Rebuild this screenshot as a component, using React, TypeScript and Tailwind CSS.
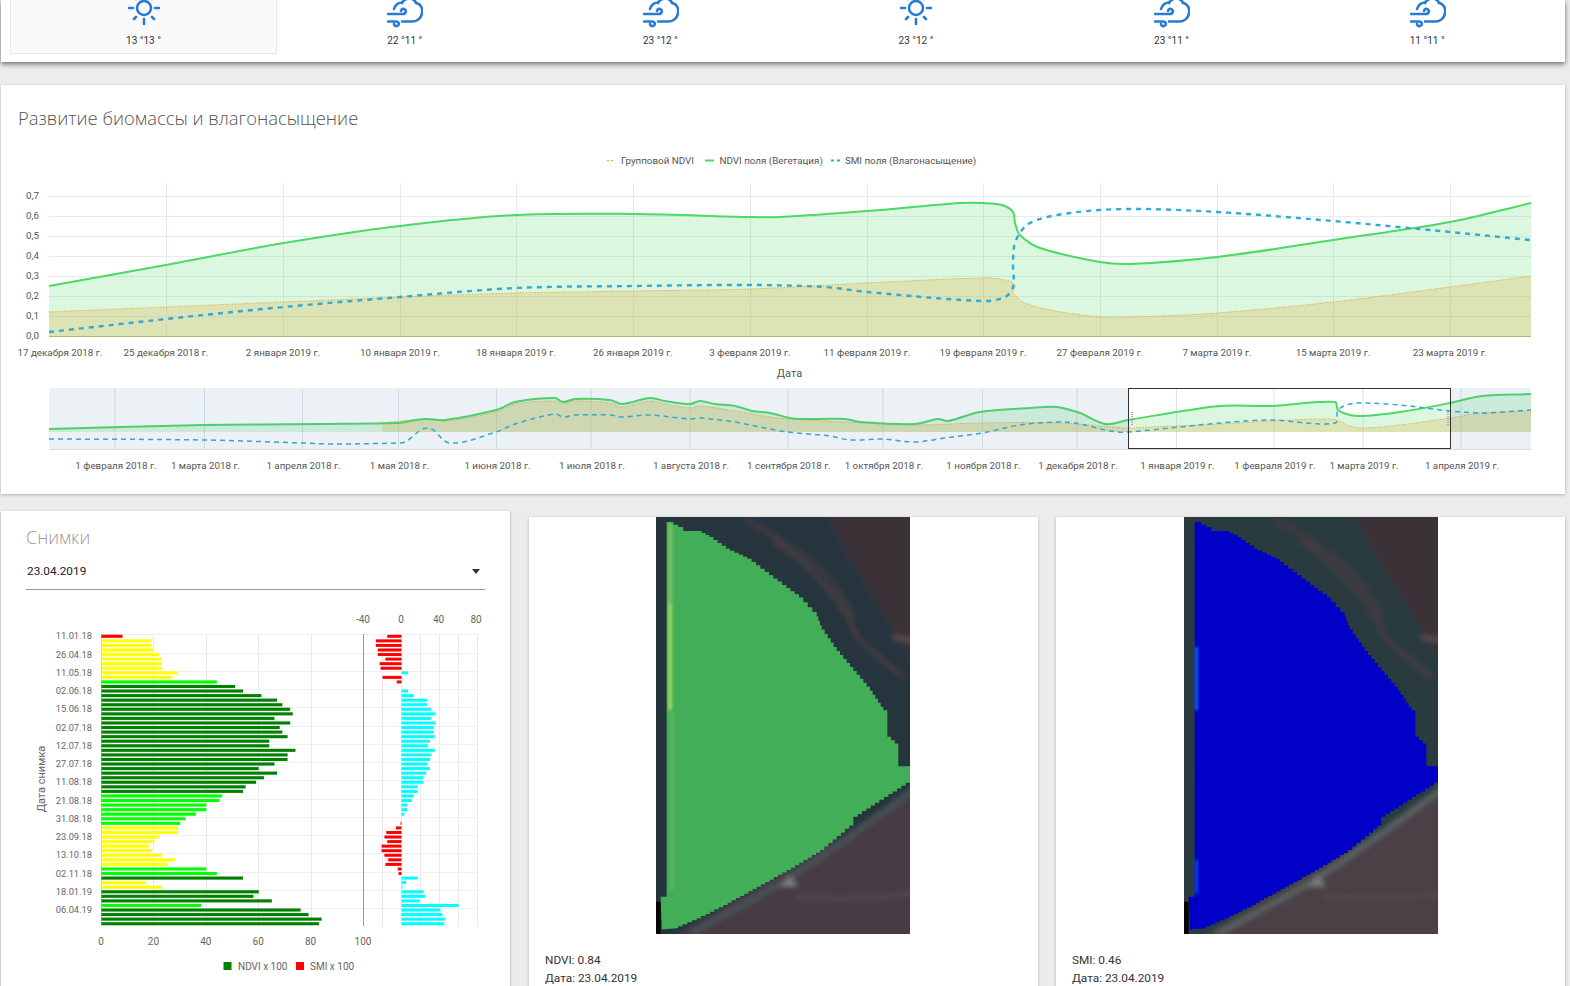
type Pt = [number, number];

// smooth line through points (chord-length catmull-rom to bezier)
function smooth(pts: Pt[]) {
  const dist = (a: Pt, b: Pt) => Math.max(Math.hypot(a[0] - b[0], a[1] - b[1]), 0.01);
  const tangent = (i: number): Pt => {
    const a = pts[Math.max(i - 1, 0)];
    const b = pts[Math.min(i + 1, pts.length - 1)];
    const len = dist(a, b);
    return [(b[0] - a[0]) / len, (b[1] - a[1]) / len];
  };
  let d = `M${pts[0][0]} ${pts[0][1]}`;
  for (let i = 0; i < pts.length - 1; i++) {
    const p1 = pts[i];
    const p2 = pts[i + 1];
    const seg = dist(p1, p2);
    const t1 = tangent(i);
    const t2 = tangent(i + 1);
    const c1x = p1[0] + (t1[0] * seg) / 3;
    const c1y = p1[1] + (t1[1] * seg) / 3;
    const c2x = p2[0] - (t2[0] * seg) / 3;
    const c2y = p2[1] - (t2[1] * seg) / 3;
    d += ` C${c1x.toFixed(1)} ${c1y.toFixed(1)} ${c2x.toFixed(1)} ${c2y.toFixed(1)} ${p2[0]} ${p2[1]}`;
  }
  return d;
}

function area(pts: Pt[], base: number) {
  return `${smooth(pts)} L${pts[pts.length - 1][0]} ${base} L${pts[0][0]} ${base} Z`;
}

// blocky edge, for the low-resolution field mask
function stair(pts: Pt[], step = 13) {
  let d = `M${pts[0][0]} ${pts[0][1]}`;
  for (let i = 1; i < pts.length; i++) {
    const [x0, y0] = pts[i - 1];
    const [x1, y1] = pts[i];
    const n = Math.max(1, Math.round(Math.max(Math.abs(x1 - x0), Math.abs(y1 - y0)) / step));
    for (let k = 1; k <= n; k++) {
      d += ` V${(y0 + ((y1 - y0) * k) / n).toFixed(0)} H${(x0 + ((x1 - x0) * k) / n).toFixed(0)}`;
    }
  }
  return d + ' Z';
}

const mainGreen: Pt[] = [[49, 286], [166, 265], [284, 243], [400, 226], [516, 215], [634, 214], [750, 217], [780, 217], [867, 211], [960, 203], [983, 203], [1002, 205], [1013, 212], [1015, 223], [1020, 235], [1040, 248], [1100, 262], [1130, 264], [1217, 257], [1333, 240], [1450, 222], [1531, 203]];
const mainOrange: Pt[] = [[49, 312], [166, 307], [284, 302], [400, 297], [516, 293], [634, 291], [750, 289], [867, 283], [983, 278], [1005, 280], [1015, 285], [1013, 293], [1030, 305], [1090, 316], [1130, 317], [1217, 313], [1333, 302], [1450, 287], [1531, 276]];
const mainBlue: Pt[] = [[49, 332], [166, 319], [284, 307], [400, 297], [516, 288], [634, 286], [750, 285], [825, 287], [867, 292], [983, 301], [1005, 297], [1013, 287], [1013, 260], [1016, 240], [1030, 223], [1070, 213], [1130, 209], [1217, 212], [1333, 221], [1450, 232], [1530, 240]];

const navGreen: Pt[] = [[49, 429], [204, 425], [320, 424], [398, 423], [405, 422], [425, 419], [445, 420], [496, 410], [515, 402], [555, 398], [563, 402], [575, 399], [610, 400], [622, 404], [650, 398], [665, 401], [690, 404], [700, 401], [715, 404], [735, 406], [752, 411], [770, 413], [790, 418], [800, 419], [845, 419], [860, 422], [915, 424], [938, 419], [948, 421], [980, 412], [1030, 408], [1057, 407], [1080, 413], [1105, 424], [1128, 420], [1220, 406], [1270, 406], [1335, 402], [1338, 410], [1350, 415], [1363, 416], [1400, 412], [1450, 403], [1482, 396], [1531, 394]];
const navOrange: Pt[] = [[382, 423], [425, 419], [445, 421], [496, 412], [515, 404], [555, 401], [563, 404], [575, 401], [610, 403], [622, 407], [650, 401], [665, 404], [690, 408], [700, 406], [735, 411], [770, 417], [790, 419], [845, 422], [915, 425], [980, 423], [1060, 423], [1100, 426], [1128, 428], [1150, 427], [1220, 424], [1270, 421], [1320, 419], [1337, 420], [1350, 426], [1363, 428], [1400, 425], [1450, 418], [1482, 413], [1531, 411]];
const navBlue: Pt[] = [[49, 439], [204, 440], [302, 443], [335, 444], [398, 443], [405, 442], [428, 428], [450, 443], [496, 432], [515, 424], [555, 414], [563, 417], [575, 415], [610, 415], [622, 417], [650, 415], [690, 419], [700, 418], [735, 422], [760, 427], [788, 432], [830, 436], [850, 440], [883, 439], [915, 442], [945, 438], [982, 433], [1020, 425], [1060, 422], [1080, 424], [1110, 431], [1128, 432], [1220, 423], [1270, 420], [1335, 423], [1338, 410], [1350, 404], [1363, 403], [1400, 405], [1450, 411], [1482, 413], [1531, 410]];

const mainTicks: [number, number, string][] = [
  [166, 60, '17 декабря 2018 г.'],
  [166, 166, '25 декабря 2018 г.'],
  [283, 283, '2 января 2019 г.'],
  [400, 400, '10 января 2019 г.'],
  [516, 516, '18 января 2019 г.'],
  [633, 633, '26 января 2019 г.'],
  [750, 750, '3 февраля 2019 г.'],
  [867, 867, '11 февраля 2019 г.'],
  [983, 983, '19 февраля 2019 г.'],
  [1100, 1100, '27 февраля 2019 г.'],
  [1217, 1217, '7 марта 2019 г.'],
  [1333, 1333, '15 марта 2019 г.'],
  [1450, 1450, '23 марта 2019 г.'],
];

const navTicks: [number, string][] = [
  [115, '1 февраля 2018 г.'],
  [204.5, '1 марта 2018 г.'],
  [302.5, '1 апреля 2018 г.'],
  [398.5, '1 мая 2018 г.'],
  [496.5, '1 июня 2018 г.'],
  [591, '1 июля 2018 г.'],
  [690, '1 августа 2018 г.'],
  [788, '1 сентября 2018 г.'],
  [883, '1 октября 2018 г.'],
  [982.5, '1 ноября 2018 г.'],
  [1077, '1 декабря 2018 г.'],
  [1176.5, '1 января 2019 г.'],
  [1274, '1 февраля 2019 г.'],
  [1363, '1 марта 2019 г.'],
  [1461, '1 апреля 2019 г.'],
];

// ndvi, smi per snapshot
const snapshots: [number, number][] = [
  [8, -15], [19, -27], [19, -27], [20, -25], [22, -25], [23, -17], [23, -23], [23, -22], [29, 7], [27, -20], [44, -5], [51, 0],
  [54, 7], [61, 13], [67, 27], [69, 27], [72, 31], [73, 36], [66, 31], [72, 36], [68, 34], [69, 34], [71, 35], [64, 30], [64, 28],
  [74, 35], [71, 31], [71, 30], [66, 27], [60, 30], [67, 26], [62, 23], [59, 23], [55, 17], [54, 17], [46, 13], [45, 11], [40, 6], [40, 6], [36, 3],
  [32, 0], [30, -1], [29, -6], [29, -16], [22, -18], [20, -15], [18, -21], [19, -21], [23, -18], [28, -14], [25, -17], [40, -4], [44, -3],
  [54, 17], [17, 5], [23, 1], [60, 23], [58, 25], [65, 19], [38, 60], [76, 41], [79, 43], [84, 46], [83, 45],
];
const rowLabels = ['11.01.18', '26.04.18', '11.05.18', '02.06.18', '15.06.18', '02.07.18', '12.07.18', '27.07.18', '11.08.18', '21.08.18', '31.08.18', '23.09.18', '13.10.18', '02.11.18', '18.01.19', '06.04.19'];

const rowY = (i: number) => 636.3 + (i * 287.4) / (snapshots.length - 1);

function ndviColor(v: number) {
  if (v < 10) return '#ff0000';
  if (v < 30) return '#ffff00';
  if (v < 50) return '#00ff00';
  return '#008000';
}

const fieldEdge: Pt[] = [[65, 35], [100, 35], [130, 50], [140, 62], [185, 62], [220, 80], [270, 115], [335, 145], [400, 195], [490, 262], [530, 305], [545, 345], [590, 410], [640, 470], [690, 530], [730, 590], [742, 600], [742, 670], [775, 700], [775, 768], [810, 768], [810, 810], [640, 920], [640, 935], [540, 1020], [440, 1080], [350, 1130], [250, 1185], [170, 1225], [100, 1255], [65, 1258], [62, 1165], [80, 1160], [80, 35]];

function SunIcon() {
  return (
    <svg width="36" height="28" viewBox="0 0 36 28" fill="none" stroke="#2a7bd4" strokeWidth="2.600" strokeLinecap="round">
      <circle cx="18" cy="8" r="7" />
      <path d="M3 8H7M29 8H33M18 19V24M8 19L10 17M28 19L26 17M8 -3L10 -1M28 -3L26 -1" />
    </svg>
  );
}

function WindIcon() {
  return (
    <svg width="36" height="28" viewBox="1 0 36 28" fill="none" stroke="#2a7bd4" strokeWidth="2.600" strokeLinecap="round" className="ml-px">
      <path d="M8 9C9 5 13 2 16 3C19 -3 28 -3 30 3C35 4 37 9 36 13C35.500 18 31 21.500 27 21.500L16 21.500" />
      <path d="M2 14H17C20 14 21 10 18 9C16 8.500 15 10 15 11" />
      <path d="M2 21.500H10C13 21.500 14 25 11 26C9 26.500 8 25 8 24" />
    </svg>
  );
}

function Weather() {
  const days = [
    { sun: true, t: '13 °13 °' },
    { sun: false, t: '22 °11 °' },
    { sun: false, t: '23 °12 °' },
    { sun: true, t: '23 °12 °' },
    { sun: false, t: '23 °11 °' },
    { sun: false, t: '11 °11 °' },
  ];
  return (
    <div className="mb-[23px] flex h-[62px] w-[1564px] bg-white pl-[9px] shadow-[0_2px_5px_rgba(0,0,0,0.55)]">
      {days.map((d, i) => (
        <div
          key={i}
          className={
            i === 0
              ? 'flex h-[54px] w-[267px] flex-col items-center border border-t-0 border-[#e8e8e8] bg-[#fafafa]'
              : 'flex h-[54px] w-[255.600px] flex-col items-center'
          }
        >
          {d.sun ? <SunIcon /> : <WindIcon />}
          <div className="mt-[6px] text-[10px] leading-[14px] text-[#333]">{d.t}</div>
        </div>
      ))}
    </div>
  );
}

function BiomassChart() {
  return (
    <div className="mb-[17px] h-[409px] w-[1564px] bg-white shadow-[0_1px_3px_rgba(0,0,0,0.25)]">
      <h2 className="h-[60px] pl-[17px] pt-[19px] font-['Open_Sans',sans-serif] text-[18.400px] font-light leading-[27px] text-[#555]">
        Развитие биомассы и влагонасыщение
      </h2>
      <svg width="1564" height="340" viewBox="1 145 1564 340" className="block" fontSize="9.800" fill="#555">
        {/* legend */}
        <path d="M607 160.500H615" stroke="#eaa52e" strokeDasharray="2 2" />
        <text x="621" y="164">Групповой NDVI</text>
        <path d="M705 160.500H714" stroke="#4cd964" strokeWidth="2" />
        <text x="719.500" y="164">NDVI поля (Вегетация)</text>
        <path d="M831 160.500H840" stroke="#2eabd6" strokeWidth="2" strokeDasharray="3 3" />
        <text x="845" y="164">SMI поля (Влагонасыщение)</text>

        {/* main plot */}
        {[0, 1, 2, 3, 4, 5, 6].map((i) => (
          <path key={i} d={`M49 ${196.500 + i * 20}H1531`} stroke="#e6ebf0" />
        ))}
        {mainTicks.map(([x]) => (
          <path key={x} d={`M${x + 0.5} 183V336`} stroke="#e6e9ed" />
        ))}
        <path d={area(mainGreen, 336)} fill="#4cd964" fillOpacity="0.2" />
        <path d={area(mainOrange, 336)} fill="#dfb750" fillOpacity="0.3" />
        <path d="M49 336.500H1531" stroke="#aeb47e" />
        <path d={smooth(mainOrange)} fill="none" stroke="#e6ae3c" strokeDasharray="1.500 1.500" />
        <path d={smooth(mainGreen)} fill="none" stroke="#4cd964" strokeWidth="2" />
        <path d={smooth(mainBlue)} fill="none" stroke="#2eabd6" strokeWidth="2.400" strokeDasharray="5 5" />
        {['0,7', '0,6', '0,5', '0,4', '0,3', '0,2', '0,1', '0,0'].map((t, i) => (
          <text key={t} x="39" y={199 + i * 20} textAnchor="end">{t}</text>
        ))}
        {mainTicks.map(([, x, t]) => (
          <text key={t} x={x} y="356" textAnchor="middle">{t}</text>
        ))}
        <text x="789.500" y="377" textAnchor="middle" fontSize="11">Дата</text>

        {/* navigator */}
        <rect x="49" y="388" width="1482" height="61" fill="#fff" />
        {navTicks.map(([x]) => (
          <path key={x} d={`M${x} 388V449`} stroke="#dde3e8" />
        ))}
        <path d={area(navGreen, 432)} fill="#4cd964" fillOpacity="0.2" />
        <path d={area(navOrange, 432)} fill="#dfb750" fillOpacity="0.3" />
        <path d={smooth(navOrange)} fill="none" stroke="#e6ae3c" strokeDasharray="1.500 1.500" />
        <path d={smooth(navGreen)} fill="none" stroke="#4cd964" strokeWidth="2" />
        <path d={smooth(navBlue)} fill="none" stroke="#2eabd6" strokeWidth="1.500" strokeDasharray="5 4" />
        <rect x="49" y="388" width="1080" height="61" fill="#648caa" fillOpacity="0.12" />
        <rect x="1451" y="388" width="80" height="61" fill="#648caa" fillOpacity="0.12" />
        <path d="M49 449.500H1531" stroke="#d8dde2" />
        <rect x="1128.500" y="388.500" width="322" height="60" fill="none" stroke="#333" />
        <path d="M1132 412V425M1448 412V425" stroke="#aab" strokeWidth="2" strokeDasharray="1 1" />
        {navTicks.map(([x, t]) => (
          <text key={t} x={x + 1} y="469" textAnchor="middle">{t}</text>
        ))}
      </svg>
    </div>
  );
}

function SnapshotsCard() {
  return (
    <div className="h-[500px] w-[509px] shrink-0 bg-white shadow-[0_1px_3px_rgba(0,0,0,0.3)]">
      <div className="px-[25px] pt-[13px]">
        <h3 className="font-['Open_Sans',sans-serif] text-[18px] font-light leading-[26px] text-[#999]">Снимки</h3>
        <div className="mt-[7px] flex h-[33px] w-[459px] items-start justify-between border-b border-[#999] pl-px pr-[5px] pt-[5px]">
          <span className="text-[11.800px] leading-[18px] text-[#222]">23.04.2019</span>
          <span className="mt-[7px] h-0 w-0 border-x-[4.500px] border-t-[5px] border-x-transparent border-t-[#333]" />
        </div>
      </div>
      <svg width="509" height="375" viewBox="1 600 509 375" className="mt-[10px] block" fontSize="10" fill="#666">
        {[0, 20, 40, 60, 80].map((v) => (
          <path key={v} d={`M${Math.round(101 + v * 2.62) + 0.5} 634V926`} stroke="#e6e9ed" />
        ))}
        {[-20, 0, 20, 40, 60, 80].map((v) => (
          <path key={v} d={`M${Math.round(401 + v * 0.945) + 0.5} 634V926`} stroke="#e6e9ed" />
        ))}
        {rowLabels.map((t, i) => (
          <g key={t}>
            <path d={`M101 ${Math.round(rowY(i * 4) - 2) + 0.5}H477`} stroke="#eef0f3" />
            <text x="92" y={rowY(i * 4) + 3} textAnchor="end" fontSize="9.300">{t}</text>
          </g>
        ))}
        <path d="M101.500 634V926" stroke="#c8ccc0" />
        <path d="M363.500 634V926" stroke="#999" />
        {snapshots.map(([n, s], i) => (
          <g key={i}>
            <rect
              x="101.500"
              y={rowY(i) - 1.500}
              width={n * 2.62}
              height="3"
              fill={ndviColor(n)}
              stroke={ndviColor(n)}
              strokeOpacity="0.2"
              strokeWidth="0.600"
            />
            {s !== 0 && (
              <rect
                x={s < 0 ? 401.500 + s * 0.95 : 401.500}
                y={rowY(i) - 1.500}
                width={Math.abs(s) * 0.95}
                height="3"
                fill={s < 0 ? '#ff0000' : '#00ffff'}
              />
            )}
          </g>
        ))}
        <text x="363" y="623" textAnchor="middle">-40</text>
        <text x="401" y="623" textAnchor="middle">0</text>
        <text x="438.500" y="623" textAnchor="middle">40</text>
        <text x="476" y="623" textAnchor="middle">80</text>
        {[0, 20, 40, 60, 80, 100].map((v) => (
          <text key={v} x={101 + v * 2.62} y="945" textAnchor="middle">{v}</text>
        ))}
        <text x="45" y="779" fontSize="11" textAnchor="middle" transform="rotate(-90 45 779)">Дата снимка</text>
        <rect x="223.500" y="962" width="8" height="8" fill="#008000" />
        <text x="238" y="970">NDVI x 100</text>
        <rect x="296" y="962" width="8" height="8" fill="#ff0000" />
        <text x="310" y="970">SMI x 100</text>
      </svg>
    </div>
  );
}

function FieldImage({ id, fill, strips, band, ground, road }: {
  id: string;
  fill: string;
  strips: { x: number; y: number; h: number; color: string }[];
  band: string;
  ground: string;
  road: string;
}) {
  return (
    <svg width="254" height="417" viewBox="48 20 762 1252" preserveAspectRatio="none" className="block">
      <defs>
        <filter id={`soft-${id}`}>
          <feGaussianBlur stdDeviation="8" />
        </filter>
        <filter id={`strip-${id}`}>
          <feGaussianBlur stdDeviation="4" />
        </filter>
      </defs>
      <rect x="48" y="20" width="762" height="1252" fill={ground} />
      <g filter={`url(#soft-${id})`}>
        <rect x="400" y="-20" width="440" height="560" fill="#3a3239" />
        <path d="M60 0H560C610 130 690 240 750 340C790 400 815 440 830 480V800H60Z" fill={band} />
        <path d="M320 30C450 100 590 190 640 330" fill="none" stroke="#3e3b41" strokeWidth="16" />
        <path d="M400 90C520 170 620 290 650 380C700 430 750 470 790 500" fill="none" stroke="#463c42" strokeWidth="12" />
        <path d="M760 378C780 385 800 388 820 388" fill="none" stroke="#5a484c" strokeWidth="18" />
        <path d="M60 800H830V850L100 1280H60Z" fill={band} />
        <path d="M830 832C700 930 560 1030 440 1110C340 1170 240 1220 150 1272" fill="none" stroke={road} strokeWidth="18" />
        <path d="M420 1130L475 1130L450 1095Z" fill="#7a7b7c" />
        <path d="M470 1160C600 1172 720 1160 820 1152" fill="none" stroke="#5c4a4e" strokeWidth="10" />
      </g>
      <rect x="48" y="20" width="30" height="1252" fill={band} />
      <rect x="48" y="1175" width="14" height="97" fill="#050505" />
      <path d={stair(fieldEdge)} fill={fill} />
      <g filter={`url(#strip-${id})`}>
        {strips.map((s) => (
          <rect key={s.y} x={s.x} y={s.y} width="11" height={s.h} fill={s.color} />
        ))}
      </g>
    </svg>
  );
}

function ImageCard({ lines, children, imageLeft }: { lines: string[]; children: React.ReactNode; imageLeft: string }) {
  return (
    <div className="h-[480px] w-[509px] shrink-0 bg-white shadow-[0_1px_3px_rgba(0,0,0,0.25)]">
      <div className={imageLeft}>{children}</div>
      <div className="mt-[17px] pl-[16px] text-[11.800px] leading-[18px] text-[#333]">
        {lines.map((l) => (
          <div key={l}>{l}</div>
        ))}
      </div>
    </div>
  );
}

export default function App() {
  return (
    <div className="h-[986px] w-full overflow-hidden bg-[#ececec] pl-px font-['Roboto',sans-serif]">
      <Weather />
      <BiomassChart />
      <div className="flex items-start gap-[19px]">
        <SnapshotsCard />
        <div className="mt-[6px] flex gap-[18px]">
          <ImageCard lines={['NDVI: 0.84', 'Дата: 23.04.2019']} imageLeft="pl-[127px]">
            <FieldImage
              id="ndvi"
              fill="#42ae57"
              band="#25343c"
              ground="#473c43"
              road="#465358"
              strips={[
                { x: 85, y: 40, h: 240, color: '#7cc55e' },
                { x: 85, y: 280, h: 320, color: '#a4d868' },
                { x: 90, y: 610, h: 530, color: '#58b85a' },
              ]}
            />
          </ImageCard>
          <ImageCard lines={['SMI: 0.46', 'Дата: 23.04.2019']} imageLeft="pl-[128px]">
            <FieldImage
              id="smi"
              fill="#0000c6"
              band="#2c3b40"
              ground="#4a4045"
              road="#5a6265"
              strips={[
                { x: 80, y: 410, h: 190, color: '#0a60ee' },
                { x: 80, y: 1050, h: 100, color: '#0a40e4' },
              ]}
            />
          </ImageCard>
        </div>
      </div>
    </div>
  );
}
